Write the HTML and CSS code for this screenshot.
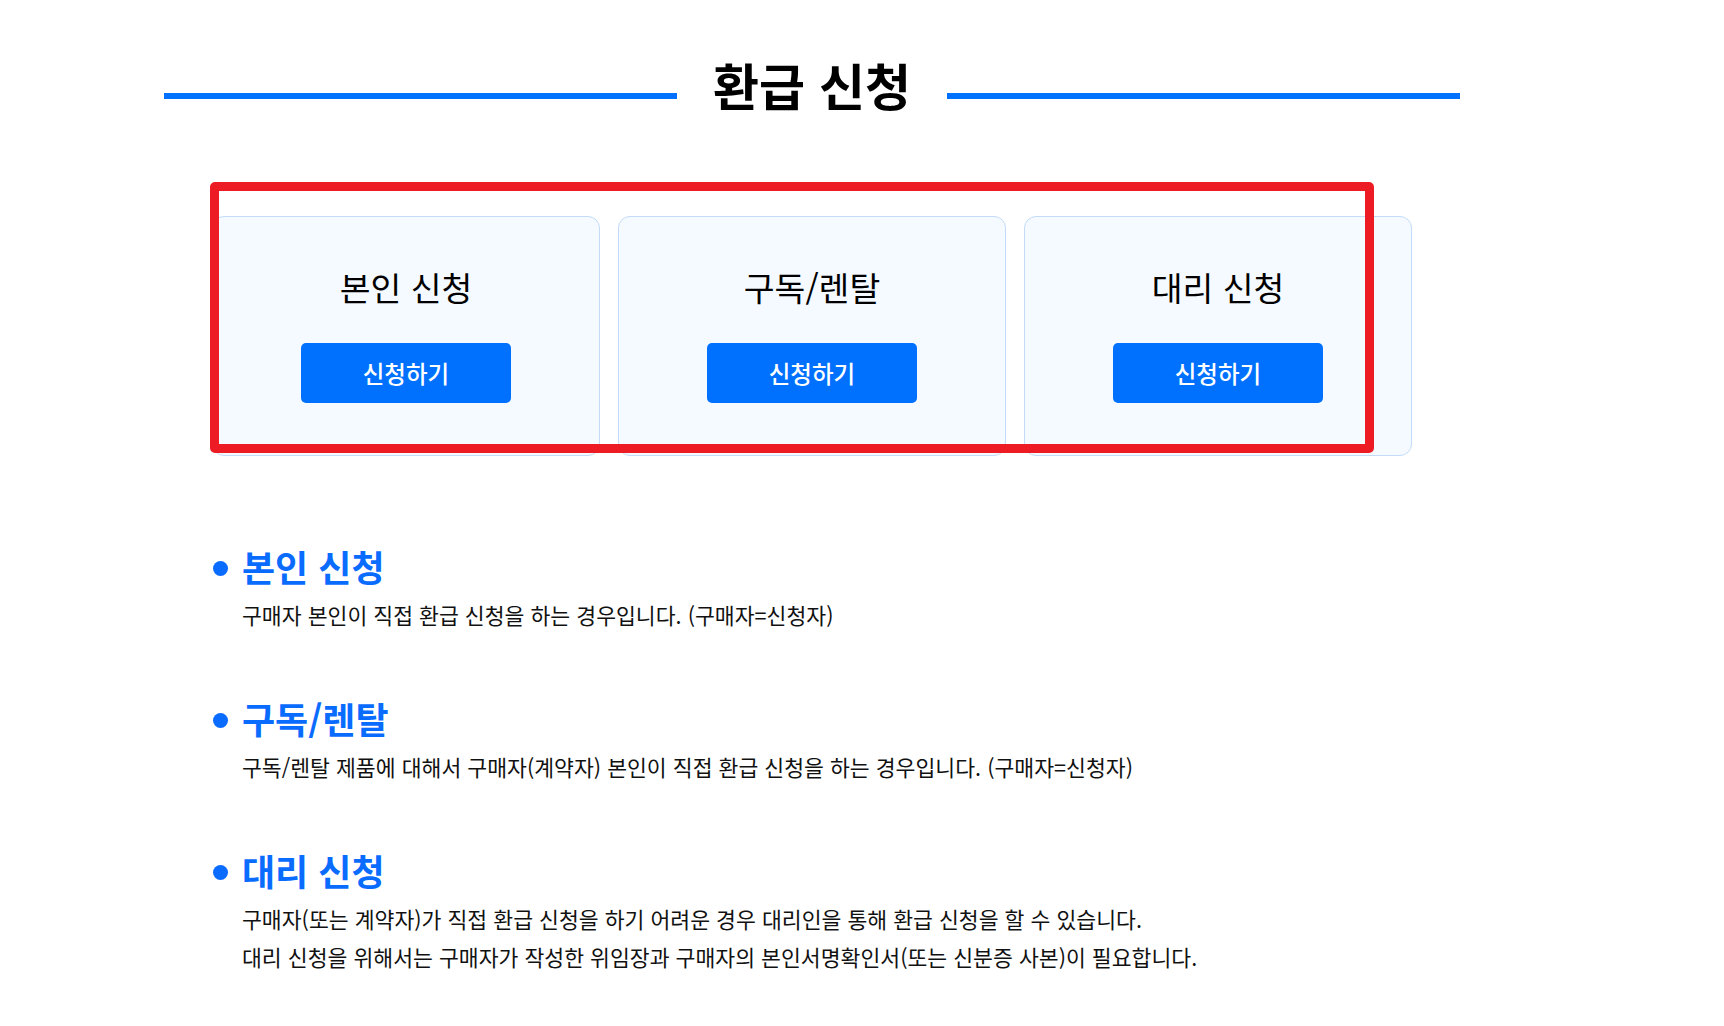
FILE: index.html
```html
<!DOCTYPE html>
<html lang="ko">

<head>
    <meta charset="UTF-8">
    <meta name="viewport" content="width=device-width, initial-scale=1.0">
    <link rel="stylesheet" href="styles.css">
</head>

<body>

    <div id="wrap">
        <div id="page-title">
            <span class="title-line"></span>
            <h1>환급 신청</h1>
            <span class="title-line"></span>
        </div>

        <div id="apply-cards">
            <div class="card">
                <div class="card-name">본인 신청</div>
                <a class="apply-btn">신청하기</a>
            </div>
            <div class="card">
                <div class="card-name">구독/렌탈</div>
                <a class="apply-btn">신청하기</a>
            </div>
            <div class="card">
                <div class="card-name">대리 신청</div>
                <a class="apply-btn">신청하기</a>
            </div>
            <!-- highlight box drawn over the cards -->
            <div id="highlight"></div>
        </div>

        <div id="guide">
            <div class="guide-item">
                <h2><span class="dot"></span>본인 신청</h2>
                <p>구매자 본인이 직접 환급 신청을 하는 경우입니다. (구매자=신청자)</p>
            </div>
            <div class="guide-item">
                <h2><span class="dot"></span>구독/렌탈</h2>
                <p>구독/렌탈 제품에 대해서 구매자(계약자) 본인이 직접 환급 신청을 하는 경우입니다. (구매자=신청자)</p>
            </div>
            <div class="guide-item">
                <h2><span class="dot"></span>대리 신청</h2>
                <p>구매자(또는 계약자)가 직접 환급 신청을 하기 어려운 경우 대리인을 통해 환급 신청을 할 수 있습니다.</p>
                <p>대리 신청을 위해서는 구매자가 작성한 위임장과 구매자의 본인서명확인서(또는 신분증 사본)이 필요합니다.</p>
            </div>
        </div>
    </div>

</body>

</html>
```

FILE: styles.css
```css
* {
    margin: 0;
    padding: 0;
    box-sizing: border-box;
}

body {
    margin: 0;
    background-color: #fff;
    color: #111;
    font-family: "Noto Sans CJK KR", "Noto Sans", sans-serif;
}

#wrap {
    width: 1296px;
    margin-left: 164px;
    padding-top: 54px;
    padding-bottom: 40px;
}

#page-title {
    display: flex;
    align-items: center;
    gap: 36px;
}

#page-title h1 {
    font-size: 50px;
    font-weight: 700;
    line-height: 60px;
    color: #000;
}

.title-line {
    flex: 1;
    height: 6px;
    margin-top: 24px;
    background-color: #0071ff;
}

#apply-cards {
    position: relative;
    width: 1200px;
    margin: 102px auto 0;
    display: flex;
    gap: 18px;
}

.card {
    flex: 1;
    display: flex;
    flex-direction: column;
    align-items: center;
    padding: 47px 0 52px;
    background-color: #f4faff;
    border: 1px solid #c3dbf8;
    border-radius: 12px;
}

.card-name {
    font-size: 33.5px;
    line-height: 46px;
    color: #000;
}

.apply-btn {
    display: flex;
    align-items: center;
    justify-content: center;
    width: 210px;
    height: 60px;
    margin-top: 33px;
    background-color: #0071ff;
    border-radius: 5px;
    color: #fff;
    font-size: 23.5px;
    font-weight: 500;
    cursor: pointer;
}

#highlight {
    position: absolute;
    left: -2px;
    top: -34px;
    width: 1164px;
    height: 271px;
    border: 9px solid #ed1c24;
    border-radius: 5px;
    pointer-events: none;
}

#guide {
    width: 1200px;
    margin: 88px auto 0;
}

.guide-item {
    margin-bottom: 62px;
}

.guide-item h2 {
    display: flex;
    align-items: center;
    gap: 14px;
    font-size: 36px;
    font-weight: 700;
    line-height: 44px;
    color: #0a6cff;
    margin-bottom: 8px;
}

.dot {
    width: 15px;
    height: 15px;
    margin-left: 1px;
    margin-top: 4px;
    border-radius: 50%;
    background-color: #0a6cff;
}

.guide-item p {
    padding-left: 30px;
    font-size: 21.6px;
    line-height: 38px;
    color: #111;
}
```
